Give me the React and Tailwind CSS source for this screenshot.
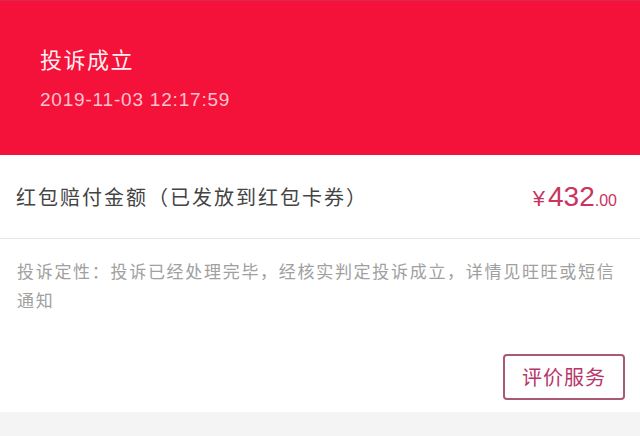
export default function App() {
  return (
    <div
      className="w-[640px] h-[436px] bg-white overflow-hidden flex flex-col"
      style={{ fontFamily: '"Noto Sans CJK SC", "Liberation Sans", sans-serif' }}
    >
      <header className="h-[155px] bg-[#f5123a] border-t border-[#d8284e] px-[40px] pt-[40px] flex flex-col">
        <h1 className="text-[22px] leading-[34px] tracking-[1.5px] text-white/95">投诉成立</h1>
        <p
          className="mt-[13px] text-[19px] leading-[24px] tracking-[0.8px] text-white/75"
          style={{ fontFamily: '"Liberation Sans", sans-serif' }}
        >
          2019-11-03 12:17:59
        </p>
      </header>

      <div className="h-[84px] flex items-center justify-between pl-[16px] pr-[23px] border-b border-[#e6e6e6]">
        <span className="text-[20px] tracking-[2px] text-[#444]">红包赔付金额（已发放到红包卡券）</span>
        <span className="text-[#c8355f] flex items-baseline" style={{ fontFamily: '"Liberation Sans", sans-serif' }}>
          <span className="text-[22px] mr-[3px]">¥</span>
          <span className="text-[28px]">432</span>
          <span className="text-[16px]">.00</span>
        </span>
      </div>

      <div className="pl-[17px] pr-[16px] pt-[17px] text-[17px] leading-[29px] tracking-[1.7px] text-[#a0a0a0]">
        投诉定性：投诉已经处理完毕，经核实判定投诉成立，详情见旺旺或短信通知
      </div>

      <div className="flex justify-end pr-[15px] mt-[40px]">
        <button className="w-[122px] h-[46px] border-2 border-[#a85a74] rounded-[4px] text-[20px] tracking-[1px] text-[#b8356a] flex items-center justify-center">
          评价服务
        </button>
      </div>

      <div className="mt-[12px] flex-1 bg-[#f4f4f4]" />
    </div>
  );
}
